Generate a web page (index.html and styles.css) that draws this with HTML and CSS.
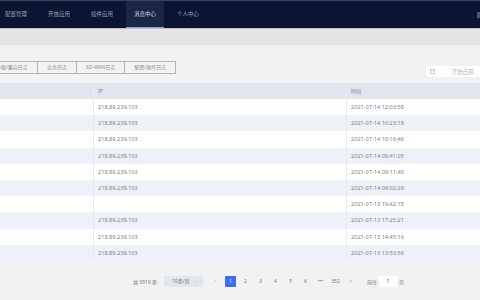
FILE: index.html
```html
<!DOCTYPE html>
<html lang="zh-CN">

<head>
    <meta charset="UTF-8">
    <meta name="viewport" content="width=device-width, initial-scale=1.0">
    <title>消息中心</title>
    <link rel="stylesheet" href="styles.css">
</head>

<body>
    <div class="topbar">
        <ul class="menu">
            <li>配置管理</li>
            <li>开放应用</li>
            <li>插件应用</li>
            <li class="active">消息中心</li>
            <li>个人中心</li>
        </ul>
        <span class="corner"></span>
    </div>
    <div class="strip"></div>

    <div class="content">
        <div class="toolbar">
            <div class="tabs">
                <span class="tab">升级/重启日志</span>
                <span class="tab">业务日志</span>
                <span class="tab">SD-WAN日志</span>
                <span class="tab">配置/操作日志</span>
            </div>
            <div class="picker">
                <svg width="5" height="5" viewBox="0 0 5 5">
                    <rect x="0.5" y="0.5" width="4" height="4" fill="none" stroke="#c4c4c4" stroke-width="0.8" />
                    <line x1="0.5" y1="1.7" x2="4.5" y2="1.7" stroke="#c4c4c4" stroke-width="0.6" />
                </svg>
                <span class="placeholder">开始日期</span>
            </div>
        </div>

        <div class="table">
            <div class="row head">
                <div class="cell"></div>
                <div class="cell">IP</div>
                <div class="cell">时间</div>
            </div>
            <div class="body">
                <div class="row"><div class="cell"></div><div class="cell">218.89.239.103</div><div class="cell">2021-07-14 12:03:58</div></div>
                <div class="row"><div class="cell"></div><div class="cell">218.89.239.103</div><div class="cell">2021-07-14 10:23:18</div></div>
                <div class="row"><div class="cell"></div><div class="cell">218.89.239.103</div><div class="cell">2021-07-14 10:16:46</div></div>
                <div class="row"><div class="cell"></div><div class="cell">218.89.239.103</div><div class="cell">2021-07-14 09:41:05</div></div>
                <div class="row"><div class="cell"></div><div class="cell">218.89.239.103</div><div class="cell">2021-07-14 09:11:40</div></div>
                <div class="row"><div class="cell"></div><div class="cell">218.89.239.103</div><div class="cell">2021-07-14 09:02:29</div></div>
                <div class="row"><div class="cell"></div><div class="cell"></div><div class="cell">2021-07-13 19:42:15</div></div>
                <div class="row"><div class="cell"></div><div class="cell">218.89.239.103</div><div class="cell">2021-07-13 17:25:21</div></div>
                <div class="row"><div class="cell"></div><div class="cell">218.89.239.103</div><div class="cell">2021-07-13 14:45:16</div></div>
                <div class="row"><div class="cell"></div><div class="cell">218.89.239.103</div><div class="cell">2021-07-13 13:53:56</div></div>
            </div>
        </div>

        <div class="pager">
            <span class="total">共 3519 条</span>
            <span class="size">10条/页<span class="arrow">⌄</span></span>
            <div class="pages">
                <span class="pg dim">&lt;</span>
                <span class="pg on">1</span>
                <span class="pg">2</span>
                <span class="pg">3</span>
                <span class="pg">4</span>
                <span class="pg">5</span>
                <span class="pg">6</span>
                <span class="pg">•••</span>
                <span class="pg">352</span>
                <span class="pg">&gt;</span>
            </div>
            <span class="jump">前往</span>
            <span class="goto">1</span>
            <span class="unit">页</span>
        </div>
    </div>
</body>

</html>
```

FILE: styles.css
```css
body {
    font-family: "Noto Sans", "Noto Sans CJK SC", sans-serif;
    background-color: #f2f2f2;
    margin: 0;
    padding: 0;
    width: 480px;
    height: 300px;
    overflow: hidden;
}

.topbar {
    display: flex;
    align-items: center;
    height: 27px;
    background-color: #0b1432;
    border-top: 1px solid #3c4357;
    border-bottom: 1px solid #bcc0c9;
}

.menu {
    display: flex;
    gap: 5px;
    height: 27px;
    margin: 0 0 0 -3px;
    padding: 0;
    list-style: none;
}

.menu li {
    padding: 0 8px;
    font-size: 5.5px;
    line-height: 27px;
    color: #9ca3b5;
}

.menu li.active {
    background-color: #1b2544;
    color: #d6dae6;
    box-shadow: inset 0 -1px 0 #7f9ef2;
}

.corner {
    width: 3px;
    height: 6px;
    margin-left: auto;
    background-color: #4d566c;
}

.strip {
    height: 16px;
    background-color: #e4e4e4;
}

.content {
    padding-top: 16px;
}

.toolbar {
    display: flex;
    justify-content: space-between;
    align-items: flex-start;
    height: 16px;
}

.tabs {
    display: flex;
    margin-left: -13px;
}

.tab {
    height: 11px;
    margin-left: -1px;
    padding: 0 9px;
    border: 1px solid #b5b5b5;
    font-size: 5px;
    line-height: 11px;
    color: #8f8f8f;
    white-space: nowrap;
}

.picker {
    display: flex;
    align-items: center;
    width: 50px;
    height: 11px;
    margin-top: 5px;
    padding-left: 4px;
    background-color: #fff;
}

.placeholder {
    margin-left: 17px;
    font-size: 5.3px;
    color: #b5b5b5;
    white-space: nowrap;
}

.table {
    margin-top: 6px;
}

.row {
    display: grid;
    grid-template-columns: 94px 253px 1fr;
    height: 16.2px;
    background-color: #fff;
}

.row.head {
    height: 16px;
    background-color: #dfe6ef;
}

.body .row:nth-child(even) {
    background-color: #edf2f9;
}

.cell {
    padding-left: 4px;
    font-size: 5.6px;
    line-height: 16px;
    color: #808080;
    white-space: nowrap;
}

.head .cell {
    font-size: 5px;
}

.cell:not(:last-child) {
    border-right: 1px solid #e7ebf1;
}

.head .cell:not(:last-child) {
    border-right-color: #eaeef4;
}

.pager {
    display: flex;
    align-items: center;
    height: 11px;
    margin-top: 15px;
    padding-left: 133px;
    font-size: 5px;
    color: #777;
}

.total {
    width: 31px;
    white-space: nowrap;
}

.size {
    position: relative;
    width: 31px;
    height: 11px;
    margin-right: 7px;
    padding-left: 8px;
    line-height: 11px;
    background-color: #e2e6ed;
    white-space: nowrap;
}

.arrow {
    position: absolute;
    right: 4px;
    top: -1px;
    color: #bbb;
}

.pages {
    display: flex;
    gap: 4px;
}

.pg {
    width: 11px;
    height: 11px;
    line-height: 11px;
    text-align: center;
    white-space: nowrap;
}

.pg.dim {
    color: #b0b0b0;
}

.pg.on {
    background-color: #3b6cf3;
    color: #fff;
    border-radius: 1px;
}

.jump {
    margin-left: 11px;
    margin-right: 2px;
    white-space: nowrap;
}

.goto {
    width: 18px;
    height: 11px;
    line-height: 11px;
    text-align: center;
    background-color: #fff;
    color: #555;
}

.unit {
    margin-left: 2px;
}
```
